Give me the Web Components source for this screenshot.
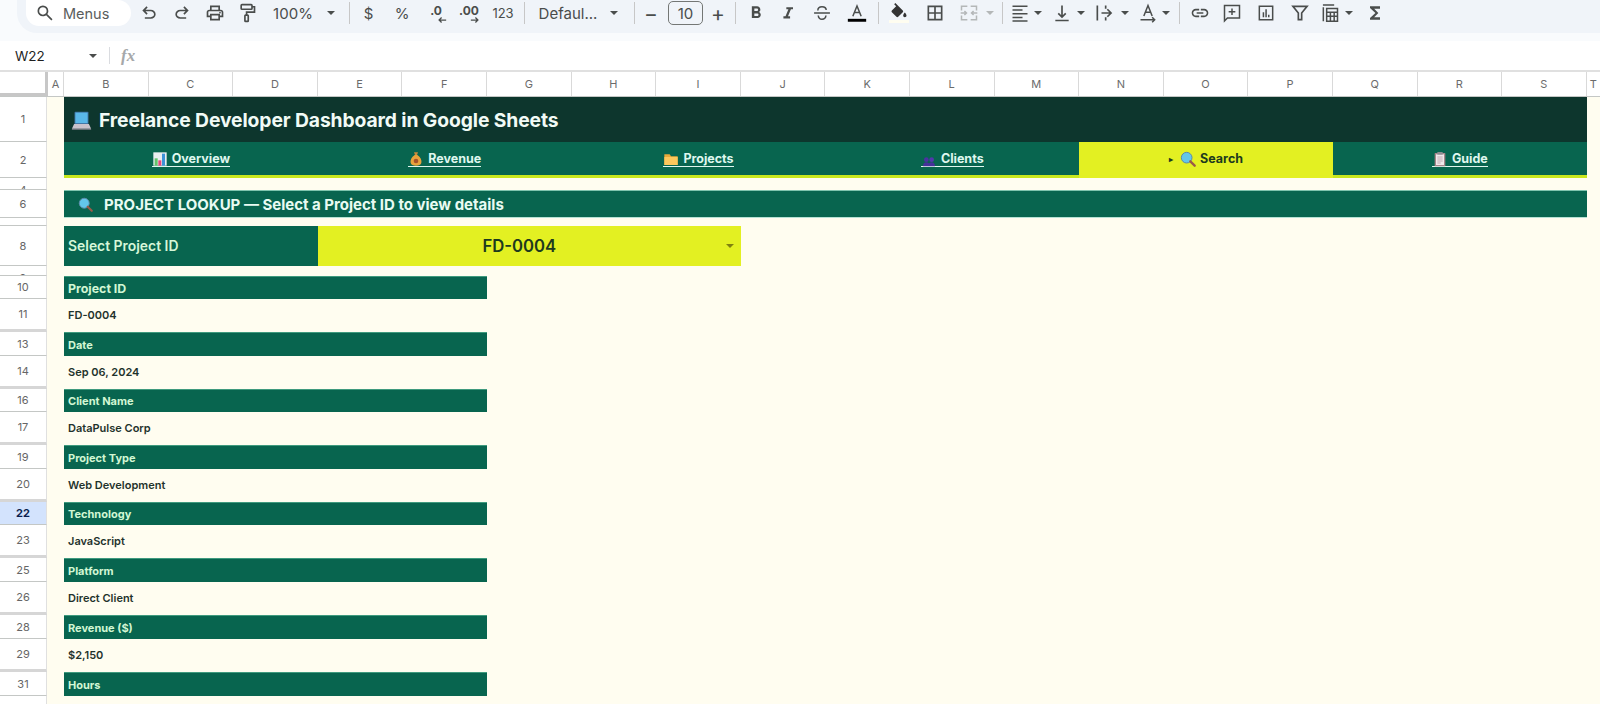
<!DOCTYPE html>
<html>
<head>
<meta charset="utf-8">
<title>Freelance Developer Dashboard</title>
<style>
  html, body { margin: 0; padding: 0; background: #fffdf0; overflow: hidden; }
  body { width: 1600px; height: 704px; font-family: Inter, "Liberation Sans", sans-serif; }
</style>
</head>
<body>
<sheet-toolbar></sheet-toolbar>
<formula-bar cell="W22"></formula-bar>
<column-header></column-header>

<sheet-row n="1" h="45"><title-bar>Freelance Developer Dashboard in Google Sheets</title-bar></sheet-row>
<sheet-row n="2" h="36">
  <nav-bar>
    <nav-tab icon="chart" label="Overview"></nav-tab>
    <nav-tab icon="money" label="Revenue"></nav-tab>
    <nav-tab icon="folder" label="Projects"></nav-tab>
    <nav-tab icon="people" label="Clients"></nav-tab>
    <nav-tab icon="search" label="Search" active></nav-tab>
    <nav-tab icon="clipboard" label="Guide"></nav-tab>
  </nav-bar>
</sheet-row>
<sheet-row n="4" h="12" clip></sheet-row>
<sheet-row n="6" h="28"><section-bar>PROJECT LOOKUP — Select a Project ID to view details</section-bar></sheet-row>
<sheet-row n="7" h="8" clip></sheet-row>
<sheet-row n="8" h="40"><project-select label="Select Project ID" value="FD-0004"></project-select></sheet-row>
<sheet-row n="9" h="10" clip></sheet-row>
<sheet-row n="10" h="23"><field-header big>Project ID</field-header></sheet-row>
<sheet-row n="11" h="33" end><field-value>FD-0004</field-value></sheet-row>
<sheet-row n="13" h="24"><field-header>Date</field-header></sheet-row>
<sheet-row n="14" h="33" end><field-value>Sep 06, 2024</field-value></sheet-row>
<sheet-row n="16" h="23"><field-header>Client Name</field-header></sheet-row>
<sheet-row n="17" h="33" end><field-value>DataPulse Corp</field-value></sheet-row>
<sheet-row n="19" h="24"><field-header>Project Type</field-header></sheet-row>
<sheet-row n="20" h="33" end><field-value>Web Development</field-value></sheet-row>
<sheet-row n="22" h="23" selected><field-header>Technology</field-header></sheet-row>
<sheet-row n="23" h="33" end><field-value>JavaScript</field-value></sheet-row>
<sheet-row n="25" h="24"><field-header>Platform</field-header></sheet-row>
<sheet-row n="26" h="33" end><field-value>Direct Client</field-value></sheet-row>
<sheet-row n="28" h="24"><field-header>Revenue ($)</field-header></sheet-row>
<sheet-row n="29" h="33" end><field-value>$2,150</field-value></sheet-row>
<sheet-row n="31" h="24"><field-header>Hours</field-header></sheet-row>
<sheet-row n="32" h="33"></sheet-row>

<script>
const COL = 84.6;
const INK = "#4a4d4c";

// toolbar icons, viewBox 0 0 24 24
const ICONS = {
  search: `<path fill="${INK}" transform="scale(.025) translate(0 960)" d="M784-120 532-372q-30 24-69 38t-83 14q-109 0-184.5-75.5T120-580q0-109 75.5-184.5T380-840q109 0 184.5 75.5T640-580q0 44-14 83t-38 69l252 252-56 56ZM380-400q75 0 127.5-52.5T560-580q0-75-52.5-127.5T380-760q-75 0-127.5 52.5T200-580q0 75 52.5 127.5T380-400Z"/>`,
  undo: `<path fill="${INK}" transform="scale(.025) translate(0 960)" d="M280-200v-80h284q63 0 109.5-40T720-420q0-60-46.5-100T564-560H312l104 104-56 56-200-200 200-200 56 56-104 104h252q97 0 166.5 63T800-420q0 94-69.5 157T564-200H280Z"/>`,
  redo: `<path fill="${INK}" transform="scale(.025) translate(0 960)" d="M396-200q-97 0-166.5-63T160-420q0-94 69.5-157T396-640h252L544-744l56-56 200 200-200 200-56-56 104-104H396q-63 0-109.5 40T240-420q0 60 46.5 100T396-280h284v80H396Z"/>`,
  print: `<path fill="${INK}" transform="scale(.025) translate(0 960)" d="M640-640v-120H320v120h-80v-200h480v200h-80Zm-480 80h640-640Zm560 100q17 0 28.5-11.5T760-500q0-17-11.5-28.5T720-540q-17 0-28.5 11.5T680-500q0 17 11.5 28.5T720-460Zm-80 260v-160H320v160h320Zm80 80H240v-160H80v-240q0-51 35-85.5t85-34.5h560q51 0 85.5 34.5T880-520v240H720v160Zm80-240v-160q0-17-11.5-28.5T760-560H200q-17 0-28.5 11.5T160-520v160h80v-80h480v80h80Z"/>`,
  paint: `<g fill="none" stroke="${INK}" stroke-width="2"><rect x="5" y="2" width="13" height="5.5" rx="1"/><path d="M18 4.500h3v6.500h-9.500v3.500"/><rect x="9.500" y="14.500" width="4" height="7.500" rx=".8"/></g>`,
  dec: `<path fill="none" stroke="${INK}" stroke-width="3" d="M22 12H5M11 6l-6 6 6 6"/>`,
  inc: `<path fill="none" stroke="${INK}" stroke-width="3" d="M2 12h17M13 6l6 6-6 6"/>`,
  bold: `<path fill="${INK}" d="M15.600 10.790c.97-.67 1.650-1.770 1.650-2.790 0-2.260-1.750-4-4-4H7v14h7.040c2.090 0 3.710-1.700 3.710-3.790 0-1.520-.86-2.820-2.150-3.420zM10 6.500h3c.83 0 1.500.67 1.500 1.500s-.67 1.500-1.500 1.500h-3v-3zm3.500 9H10v-3h3.500c.83 0 1.500.67 1.500 1.500s-.67 1.500-1.500 1.500z"/>`,
  italic: `<path fill="${INK}" d="M10 5v2.500h2.500L9 16H6.500v2.500h8V16H12l3.500-8.500H18V5z"/>`,
  strike: `<g fill="none" stroke="${INK}" stroke-width="1.800"><path d="M7 9c0-3 2.200-4.500 5-4.500s5 1.500 5 4M2.500 12h19M7.500 15c.3 3 2 4.500 4.500 4.500s4.500-1.500 4.700-4.500"/></g>`,
  colorA: `<path fill="none" stroke="${INK}" stroke-width="1.800" d="M7 16 12 3.500 17 16M8.800 11.500h6.400"/><rect x="1" y="19" width="22" height="3.500" fill="#000"/>`,
  fill: `<path fill="#333" d="M16.560 8.940 7.620 0 6.210 1.410l2.380 2.380-5.150 5.150c-.59.59-.59 1.540 0 2.120l5.500 5.500c.29.29.68.44 1.060.44s.77-.15 1.060-.44l5.500-5.500c.59-.58.59-1.530 0-2.120z M19 11.500s-2 2.170-2 3.500c0 1.100.9 2 2 2s2-.9 2-2c0-1.330-2-3.500-2-3.500z"/><rect x="0" y="20.500" width="24" height="3.500" fill="#fffdf0"/>`,
  borders: `<path fill="${INK}" d="M3 3v18h18V3H3zm8 16H5v-6h6v6zm0-8H5V5h6v6zm8 8h-6v-6h6v6zm0-8h-6V5h6v6z"/>`,
  merge: `<path fill="none" stroke="#b4b7b8" stroke-width="1.800" d="M3 9V4h7M3 15v5h7M21 9V4h-7M21 15v5h-7M2 12h7M6.500 9.500 9 12l-2.500 2.500M22 12h-7M17.500 9.500 15 12l2.500 2.500"/>`,
  align: `<path fill="none" stroke="${INK}" stroke-width="1.800" d="M3 4h18M3 8.500h12M3 13h18M3 17.500h12M3 21.500h18"/>`,
  valign: `<path fill="none" stroke="${INK}" stroke-width="2" d="M4 21h16M12 3v14M7.500 12.500 12 17l4.500-4.500"/>`,
  wrap: `<path fill="none" stroke="${INK}" stroke-width="2" d="M4 3v18M9 12h12M16 7.500l4.500 4.500-4.500 4.500M14 3v4M14 17v4"/>`,
  rotate: `<path fill="none" stroke="${INK}" stroke-width="1.800" d="M7 15.500 12 3l5 12.500M8.800 11h6.400M3 20h17M17 17l3 3-3 3"/>`,
  link: `<path fill="${INK}" d="M3.900 12c0-1.710 1.390-3.100 3.100-3.100h4V7H7c-2.760 0-5 2.240-5 5s2.240 5 5 5h4v-1.900H7c-1.710 0-3.100-1.390-3.100-3.100zM8 13h8v-2H8v2zm9-6h-4v1.900h4c1.710 0 3.100 1.390 3.100 3.100s-1.390 3.100-3.100 3.100h-4V17h4c2.760 0 5-2.240 5-5s-2.240-5-5-5z"/>`,
  comment: `<path fill="none" stroke="${INK}" stroke-width="1.800" d="M3 3h18v15H6.500L3 21.500zM12 6.500v8M8 10.500h8"/>`,
  bars: `<path fill="none" stroke="${INK}" stroke-width="1.800" d="M4 4h16v16H4z"/><path fill="${INK}" d="M8 11h1.800v6H8zM11.200 7.500H13V17h-1.800zM14.400 14h1.800v3h-1.800z"/>`,
  filter: `<path fill="none" stroke="${INK}" stroke-width="2" d="M3.500 4h17l-6.500 8v8h-4v-8z"/>`,
  table: `<path fill="none" stroke="${INK}" stroke-width="1.800" d="M4 5v17M3.500 2.500H17M8 6.500h13v15.500H8zM8 11h13M8 16h13M12.500 11v11M17 11v11"/>`,
  sigma: `<path fill="${INK}" d="M18 4H6v2l6.500 6L6 18v2h12v-3h-7l5-5-5-5h7z"/>`,
  // emoji, full colour
  laptop: `<rect x="4" y="2" width="16" height="14" rx="1" fill="#3f6f9f"/><rect x="5" y="3" width="14" height="12" fill="#59b7e8"/><path d="M3.500 16h17l2.500 5.500H1z" fill="#c9c2cc"/><path d="M1 21.500h22v1H1z" fill="#8f8a96"/>`,
  chart: `<rect x="2" y="2" width="20" height="20" fill="#e9eef0"/><rect x="4" y="11" width="4.500" height="11" fill="#63c36b"/><rect x="9.500" y="14" width="4.500" height="8" fill="#e8467c"/><rect x="15" y="4" width="4.500" height="18" fill="#3d93d8"/>`,
  money: `<path d="M9 2h6l-1.500 4h-3z" fill="#c98a3a"/><path d="M10 6h4c5 3 7 8 6 12-.7 3-4 4-8 4s-7.300-1-8-4c-1-4 1-9 6-12z" fill="#e8a23c"/><circle cx="12" cy="15" r="3.500" fill="#a5522a"/>`,
  folder: `<path d="M2 5h8l2 3h10v13H2z" fill="#e8a93a"/><path d="M2 9h20v12H2z" fill="#fcc85c"/>`,
  people: `<circle cx="8" cy="13" r="3.500" fill="#4a32a0"/><circle cx="16" cy="13" r="3.500" fill="#5238ac"/><path d="M3 23c0-4 2-6 5-6s5 2 5 6zM11 23c0-4 2-6 5-6s5 2 5 6z" fill="#45309a"/>`,
  glass: `<circle cx="10" cy="10" r="8" fill="#63c6ea" stroke="#5d8aa8" stroke-width="1.500"/><path d="M15.500 15.500 22 22" stroke="#9a5a48" stroke-width="3.500" stroke-linecap="round"/>`,
  clipboard: `<rect x="4" y="3" width="16" height="20" rx="1" fill="#a8858a"/><rect x="6" y="5" width="12" height="16" fill="#f1e8ea"/><rect x="8" y="1.500" width="8" height="4" fill="#8d8d92"/><path d="M8 9h8M8 12h8M8 15h8M8 18h5" stroke="#b79aa5" stroke-width="1.200"/>`
};

function svg(name, size) {
  return `<svg width="${size}" height="${size}" viewBox="0 0 24 24" aria-hidden="true">${ICONS[name]}</svg>`;
}

class SheetToolbar extends HTMLElement {
  constructor() {
    super();
    this.attachShadow({ mode: "open" });
  }

  connectedCallback() {
    // [kind, what, centre x, width]
    const items = [
      ["i", "undo", 149], ["i", "redo", 181.5], ["i", "print", 214.5], ["i", "paint", 247],
      ["t", "100%", 293, 40], ["c", "", 330.5], ["d", "", 349],
      ["t", "$", 368.5, 14], ["t", "%", 402, 16], ["n", ".0|dec", 436], ["n", ".00|inc", 469], ["s", "123", 503, 24], ["d", "", 524],
      ["t", "Defaul...", 568, 58], ["c", "", 614], ["d", "", 634],
      ["m", "−", 651], ["b", "10", 685.5], ["m", "+", 718], ["d", "", 735.5],
      ["i", "bold", 755.5], ["i", "italic", 788], ["i", "strike", 822], ["i", "colorA", 856.5], ["d", "", 878],
      ["i", "fill", 898.5], ["i", "borders", 934.5], ["i", "merge", 969], ["c", "g", 990], ["d", "", 1002],
      ["i", "align", 1019.5], ["c", "", 1038], ["i", "valign", 1062], ["c", "", 1081], ["i", "wrap", 1104], ["c", "", 1124.5],
      ["i", "rotate", 1148], ["c", "", 1166], ["d", "", 1179.5],
      ["i", "link", 1199.5], ["i", "comment", 1232], ["i", "bars", 1266], ["i", "filter", 1300], ["i", "table", 1329.5], ["c", "", 1349], ["i", "sigma", 1375]
    ];
    let right = 131;
    const html = items.map(([kind, what, cx, w]) => {
      const width = w || { i: 20, c: 10, d: 1, m: 18, b: 35, n: 22 }[kind];
      const gap = cx - width / 2 - right;
      right = cx + width / 2;
      const st = `style="margin-left:${gap}px;width:${width}px"`;
      if (kind === "i") return `<span class="it" ${st}>${svg(what, 20)}</span>`;
      if (kind === "c") return `<span class="it" ${st}><i class="caret ${what}"></i></span>`;
      if (kind === "d") return `<span class="div" ${st}></span>`;
      if (kind === "b") return `<span class="it size" ${st}>${what}</span>`;
      if (kind === "m") return `<span class="it sign" ${st}>${what}</span>`;
      if (kind === "n") {
        const [txt, ic] = what.split("|");
        return `<span class="it num" ${st}><b>${txt}</b>${svg(ic, 10)}</span>`;
      }
      return `<span class="it ${kind === "s" ? "small" : ""}" ${st}>${what}</span>`;
    }).join("");
    this.shadowRoot.innerHTML = `
      <style>
        :host { display: block; height: 41px; background: #f9fbfd; overflow: hidden; }
        .bar {
          display: flex; align-items: center; height: 33px; margin-left: 17px; padding-bottom: 7px; box-sizing: border-box;
          background: #f0f4f9; border-radius: 0 0 0 20px; font-size: 15px; color: ${INK};
        }
        .pill {
          display: flex; align-items: center; flex: none; box-sizing: border-box; width: 105px; height: 26px; margin: 0 0 0 9px; padding-left: 9px; gap: 8px;
          background: #fff; border-radius: 0 13px 13px 13px; font-size: 14.500px; color: #5a5d5c;
        }
        .pill svg { flex: none; }
        .it { display: flex; align-items: center; justify-content: center; flex: none; white-space: nowrap; height: 24px; }
        .div { flex: none; height: 22px; background: #c7c7c7; }
        .caret { display: block; width: 0; height: 0; border: 4.500px solid transparent; border-top-color: ${INK}; border-bottom: 0; }
        .caret.g { border-top-color: #b4b7b8; }
        .size { box-sizing: border-box; border: 1px solid #747775; border-radius: 5px; height: 24px; }
        .sign { font-size: 21px; }
        .small { font-size: 13px; }
        .num { position: relative; font-size: 12px; height: 24px; align-items: flex-start; }
        .num b { font-weight: 700; line-height: 19px; }
        .num svg { position: absolute; right: 0; top: 14px; }
      </style>
      <div class="bar">
        <span class="pill">${svg("search", 20)}<span>Menus</span></span>
        ${html}
      </div>`;
  }
}

class FormulaBar extends HTMLElement {
  constructor() {
    super();
    this.attachShadow({ mode: "open" });
  }

  connectedCallback() {
    this.shadowRoot.innerHTML = `
      <style>
        :host { display: flex; align-items: center; height: 29px; background: #fff; font-size: 13.500px; color: #1f1f1f; border-bottom: 1px solid #e0e0e0; box-sizing: content-box; }
        .cell { width: 74px; padding-left: 15px; box-sizing: content-box; }
        .caret { width: 0; height: 0; border: 4px solid transparent; border-top-color: ${INK}; border-bottom: 0; margin-right: 12px; }
        .sep { width: 1px; height: 17px; background: #dadce0; }
        .fx { margin-left: 11px; font: italic 700 17px "Liberation Serif", serif; color: #a6a8aa; }
      </style>
      <span class="cell">${this.getAttribute("cell")}</span>
      <span class="caret"></span>
      <span class="sep"></span>
      <span class="fx">fx</span>`;
  }
}

class ColumnHeader extends HTMLElement {
  constructor() {
    super();
    this.attachShadow({ mode: "open" });
  }

  connectedCallback() {
    const cols = "BCDEFGHIJKLMNOPQRS".split("").map(c => `<span class="c">${c}</span>`).join("");
    this.shadowRoot.innerHTML = `
      <style>
        :host { display: flex; height: 24px; background: #fff; font-size: 11px; color: #6b6b6b; border-bottom: 1px solid #c4c7c5; border-top: 1px solid #e0e0e0; }
        .corner { width: 45px; flex: none; background: #fff; border-right: 3px solid #c7c7c7; border-bottom: 3px solid #c7c7c7; height: 21px; }
        .a { width: 16px; flex: none; box-sizing: border-box; display: grid; place-items: center; border-right: 1px solid #d9d9d9; }
        .c { width: ${COL}px; flex: none; box-sizing: border-box; display: grid; place-items: center; border-right: 1px solid #d9d9d9; }
        .t { flex: 1; display: grid; place-items: center; }
      </style>
      <span class="corner"></span><span class="a">A</span>${cols}<span class="t">T</span>`;
  }
}

class SheetRow extends HTMLElement {
  constructor() {
    super();
    this.attachShadow({ mode: "open" });
  }

  connectedCallback() {
    this.style.height = this.getAttribute("h") + "px";
    this.shadowRoot.innerHTML = `
      <style>
        :host { display: flex; background: #fffdf0; overflow: hidden; }
        .num {
          width: 47px; flex: none; box-sizing: border-box; display: flex; align-items: center; justify-content: center;
          background: #fff; border-right: 1px solid #e0e0e0; border-bottom: 1px solid #c4c7c5; color: #666; font-size: 11px; overflow: hidden;
        }
        :host([clip]) .num { align-items: flex-start; padding-top: 5px; }
        :host([end]) .num { border-bottom: 3px solid #d6d6d6; }
        :host([selected]) .num { background: #d3e3fd; color: #0b1f4f; font-weight: 700; }
        .a { width: 17px; flex: none; }
        .cells { width: ${COL * 18}px; flex: none; display: flex; }
      </style>
      <span class="num">${this.getAttribute("n")}</span>
      <span class="a"></span>
      <div class="cells"><slot></slot></div>`;
  }
}

class TitleBar extends HTMLElement {
  constructor() {
    super();
    this.attachShadow({ mode: "open" });
  }

  connectedCallback() {
    this.shadowRoot.innerHTML = `
      <style>
        :host { display: flex; align-items: center; gap: 7px; flex: 1; padding: 1px 0 0 7px; background: #0d362d; color: #f1fbf6; font-size: 19.300px; font-weight: 700; letter-spacing: -.1px; }
      </style>
      ${svg("laptop", 21)}<span><slot></slot></span>`;
  }
}

class NavBar extends HTMLElement {
  constructor() {
    super();
    this.attachShadow({ mode: "open" });
  }

  connectedCallback() {
    this.shadowRoot.innerHTML = `
      <style>
        :host { display: flex; flex: 1; }
      </style>
      <slot></slot>`;
  }
}

class NavTab extends HTMLElement {
  constructor() {
    super();
    this.attachShadow({ mode: "open" });
  }

  connectedCallback() {
    const active = this.hasAttribute("active");
    const icon = this.getAttribute("icon") === "search" ? "glass" : this.getAttribute("icon");
    this.shadowRoot.innerHTML = `
      <style>
        :host { display: flex; flex: 1; align-items: flex-start; justify-content: center; box-sizing: border-box; height: 36px; padding-top: 9px; background: #08654f; border-bottom: 3px solid #c8e81e; color: #dff7ee; font-size: 12.500px; font-weight: 700; }
        :host([active]) { background: #e3f022; border-bottom: 0; color: #1d3a1e; }
        a { display: flex; align-items: center; gap: 4px; height: 15px; border-bottom: 1px solid currentColor; white-space: nowrap; }
        :host([active]) a { border-bottom: 0; }
        .play { font-size: 8px; margin-right: 3px; }
      </style>
      <a>${active ? '<span class="play">▸</span>' : ""}${svg(icon, 16)}<span>${this.getAttribute("label")}</span></a>`;
  }
}

class SectionBar extends HTMLElement {
  constructor() {
    super();
    this.attachShadow({ mode: "open" });
  }

  connectedCallback() {
    this.shadowRoot.innerHTML = `
      <style>
        :host { display: flex; align-items: center; flex: 1; gap: 11px; box-sizing: border-box; padding-left: 14px; background: #08654f; border-top: 1px solid #7fc4ae; border-bottom: 1px solid #b5e2d4; color: #e9fbf2; font-size: 15px; font-weight: 700; }
      </style>
      ${svg("glass", 15)}<span><slot></slot></span>`;
  }
}

class ProjectSelect extends HTMLElement {
  constructor() {
    super();
    this.attachShadow({ mode: "open" });
  }

  connectedCallback() {
    this.shadowRoot.innerHTML = `
      <style>
        :host { display: flex; flex: none; width: ${COL * 8}px; font-weight: 600; }
        .label { width: ${COL * 3}px; box-sizing: border-box; display: flex; align-items: center; padding-left: 4px; background: #08654f; color: #d6f7d9; font-size: 13.900px; }
        .value { width: ${COL * 5}px; box-sizing: border-box; display: flex; align-items: center; justify-content: center; padding-right: 20px; position: relative; background: #e3f022; color: #1d3a1e; font-size: 16.700px; }
        .caret { position: absolute; right: 7px; top: 18px; width: 0; height: 0; border: 4px solid transparent; border-top-color: #80810f; border-bottom: 0; }
      </style>
      <span class="label">${this.getAttribute("label")}</span>
      <span class="value">${this.getAttribute("value")}<i class="caret"></i></span>`;
  }
}

class FieldHeader extends HTMLElement {
  constructor() {
    super();
    this.attachShadow({ mode: "open" });
  }

  connectedCallback() {
    this.shadowRoot.innerHTML = `
      <style>
        :host { display: flex; align-items: center; flex: none; width: ${COL * 5}px; box-sizing: border-box; padding-left: 4px; background: #08654f; color: #d2f7d4; font-size: 11px; font-weight: 700; border-top: 1px solid #3f9a7e; }
        :host([big]) { font-size: 12.400px; }
      </style>
      <slot></slot>`;
  }
}

class FieldValue extends HTMLElement {
  constructor() {
    super();
    this.attachShadow({ mode: "open" });
  }

  connectedCallback() {
    this.shadowRoot.innerHTML = `
      <style>
        :host { display: flex; align-items: center; flex: none; width: ${COL * 5}px; box-sizing: border-box; padding: 0 0 2px 4px; color: #1f332c; font-size: 11px; font-weight: 600; }
      </style>
      <slot></slot>`;
  }
}

customElements.define("sheet-toolbar", SheetToolbar);
customElements.define("formula-bar", FormulaBar);
customElements.define("column-header", ColumnHeader);
customElements.define("sheet-row", SheetRow);
customElements.define("title-bar", TitleBar);
customElements.define("nav-bar", NavBar);
customElements.define("nav-tab", NavTab);
customElements.define("section-bar", SectionBar);
customElements.define("project-select", ProjectSelect);
customElements.define("field-header", FieldHeader);
customElements.define("field-value", FieldValue);
</script>
</body>
</html>
